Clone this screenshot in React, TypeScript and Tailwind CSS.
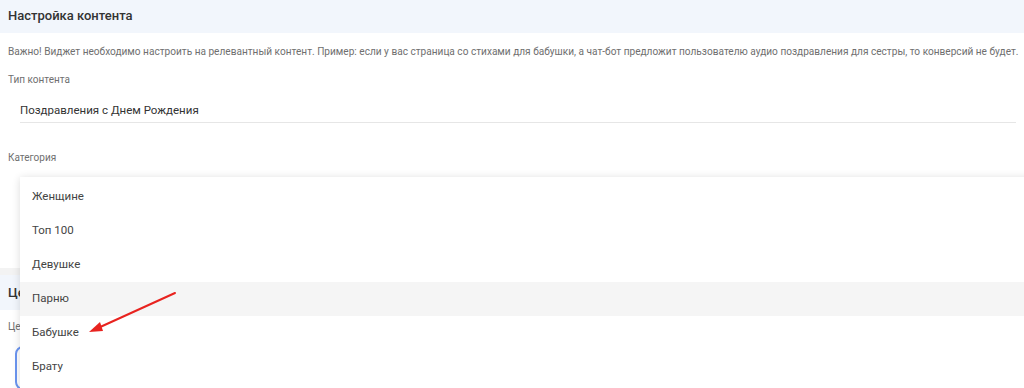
import React from "react";

const categories = ["Женщине", "Топ 100", "Девушке", "Парню", "Бабушке", "Брату", "Дедушке"];

export default function App() {
  return (
    <div
      className="relative h-[388px] w-full overflow-hidden bg-white text-[#333]"
      style={{ fontFamily: "Roboto, 'Liberation Sans', sans-serif" }}
    >
      {/* Content settings section */}
      <section className="h-[268px]">
        <div className="flex h-[33px] items-center bg-[#f2f6fc] px-2 pb-[2px] text-[13px] font-medium text-[#333]">
          Настройка контента
        </div>
        <div className="px-2">
          <p className="mt-[12px] whitespace-nowrap text-[10.1px] leading-[14px] text-[#6f6f6f]">
            Важно! Виджет необходимо настроить на релевантный контент. Пример: если у вас страница со стихами для бабушки, а чат-бот предложит пользователю аудио поздравления для сестры, то конверсий не будет.
          </p>
          <div className="mt-[14px] text-[10px] leading-[14px] text-[#6f6f6f]">Тип контента</div>
          <div className="ml-3 mt-[13px] border-b border-[#e6e6e6] pb-[2px] text-[11.5px] leading-[20px] text-[#333]">
            Поздравления с Днем Рождения
          </div>
          <div className="mt-[28px] text-[10px] leading-[14px] text-[#6f6f6f]">Категория</div>
        </div>
      </section>

      <div className="h-[7px] bg-[#f3f3f3]" />

      {/* Goals section (mostly hidden by the menu) */}
      <section>
        <div className="flex h-[35px] items-center bg-[#f2f6fc] px-2 text-[13px] font-medium text-[#333]">
          Цели виджета
        </div>
        <div className="px-2">
          <div className="mt-[10px] text-[10px] leading-[14px] text-[#6f6f6f]">Цель</div>
          <div className="ml-[7px] mt-[12px] flex gap-2">
            <div className="h-[44px] w-[120px] rounded-lg border-2 border-[#6b95f0]" />
          </div>
        </div>
      </section>

      {/* Category dropdown menu */}
      <div className="absolute left-[20px] right-[-20px] top-[177px] bg-white py-[3px] shadow-[0_1px_8px_rgba(0,0,0,0.14)]">
        {categories.map((c) => (
          <div
            key={c}
            className={
              c === "Парню"
                ? "flex h-[34px] items-center bg-[#f5f5f5] px-3 text-[11.5px] text-[#444]"
                : "flex h-[34px] items-center px-3 text-[11.5px] text-[#444]"
            }
          >
            {c}
          </div>
        ))}
      </div>

      {/* Red annotation arrow */}
      <svg className="absolute left-0 top-0" width="200" height="388" viewBox="0 0 200 388">
        <line x1="175" y1="293" x2="98" y2="328" stroke="#e8231f" strokeWidth="2" strokeLinecap="round" />
        <polygon points="89,332 100,322 103,331" fill="#e8231f" />
      </svg>
    </div>
  );
}
